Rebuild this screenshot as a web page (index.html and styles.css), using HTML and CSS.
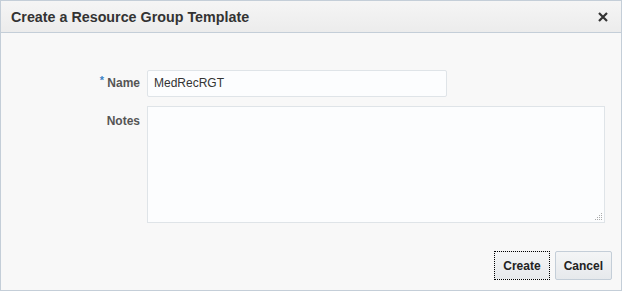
FILE: index.html
```html
<!DOCTYPE html>
<html>
<head>
<meta charset="utf-8">
<link rel="stylesheet" href="styles.css">
</head>
<body>
<div class="dialog">
  <div class="header">
    <span class="title">Create a Resource Group Template</span>
    <svg class="close" width="10" height="10" viewBox="0 0 10 10">
      <path d="M1 1 L9 9 M9 1 L1 9" stroke="#333" stroke-width="2.2" fill="none"/>
    </svg>
  </div>
  <div class="content">
    <div class="row">
      <label class="label"><span class="req">*</span> Name</label>
      <div class="input">MedRecRGT</div>
    </div>
    <div class="row">
      <label class="label label-notes">Notes</label>
      <div class="textarea">
        <svg class="grip" width="8" height="8" viewBox="0 0 8 8">
          <rect x="6" y="0" width="1" height="1" fill="#aaa"/>
          <rect x="4" y="2" width="1" height="1" fill="#aaa"/>
          <rect x="6" y="2" width="1" height="1" fill="#aaa"/>
          <rect x="2" y="4" width="1" height="1" fill="#aaa"/>
          <rect x="4" y="4" width="1" height="1" fill="#aaa"/>
          <rect x="6" y="4" width="1" height="1" fill="#aaa"/>
          <rect x="0" y="6" width="1" height="1" fill="#aaa"/>
          <rect x="2" y="6" width="1" height="1" fill="#aaa"/>
          <rect x="4" y="6" width="1" height="1" fill="#aaa"/>
          <rect x="6" y="6" width="1" height="1" fill="#aaa"/>
        </svg>
      </div>
    </div>
  </div>
  <div class="footer">
    <button class="btn focus">Create</button>
    <button class="btn">Cancel</button>
  </div>
</div>
</body>
</html>
```
FILE: styles.css
```css
html, body { margin: 0; padding: 0; }
body {
  width: 622px; height: 291px;
  font-family: "Liberation Sans", Arial, sans-serif;
  background: #f8f8f8;
}
.dialog {
  box-sizing: border-box;
  width: 622px; height: 291px;
  border: 1px solid #c4ced8;
  background: #f8f8f8;
  display: flex; flex-direction: column;
}
.header {
  height: 32px;
  flex: none;
  box-sizing: border-box;
  border-bottom: 1px solid #c4ced8;
  background: linear-gradient(#f5f5f5, #ececec);
  display: flex; align-items: center; justify-content: space-between;
  padding: 0 13px 0 10px;
}
.title { font-weight: bold; font-size: 14.3px; color: #333; }
.close { display: block; }
.content { flex: 1; padding-top: 37px; }
.row { display: flex; align-items: flex-start; margin-bottom: 9px; }
.label {
  width: 146px; height: 27px; box-sizing: border-box; padding-right: 7px;
  text-align: right; font-size: 12px; font-weight: bold; color: #555;
  line-height: 27px;
}
.label-notes { padding-top: 2px; }
.req { color: #3a82c4; font-size: 11px; position: relative; top: -3px; }
.input {
  width: 300px; height: 27px; box-sizing: border-box;
  border: 1px solid #dfe4e8; border-radius: 2px; background: #fcfdfe;
  font-size: 12px; color: #333; line-height: 25px; padding-left: 6px;
}
.textarea {
  position: relative;
  width: 458px; height: 117px; box-sizing: border-box;
  border: 1px solid #dfe4e8; background: #fcfdfe;
}
.grip { position: absolute; right: 1px; bottom: 1px; }
.footer {
  display: flex; justify-content: flex-end; gap: 5px;
  padding: 0 9px 10px 0;
}
.btn {
  height: 29px; padding: 0 8px;
  border: 1px solid #c4ced8; border-radius: 2px;
  background: linear-gradient(#f4f5f6, #e6e9ec);
  font-family: "Liberation Sans", Arial, sans-serif;
  font-size: 12px; font-weight: bold; color: #222;
}
.btn.focus { border: 1px dotted #000; border-radius: 0; }
```
